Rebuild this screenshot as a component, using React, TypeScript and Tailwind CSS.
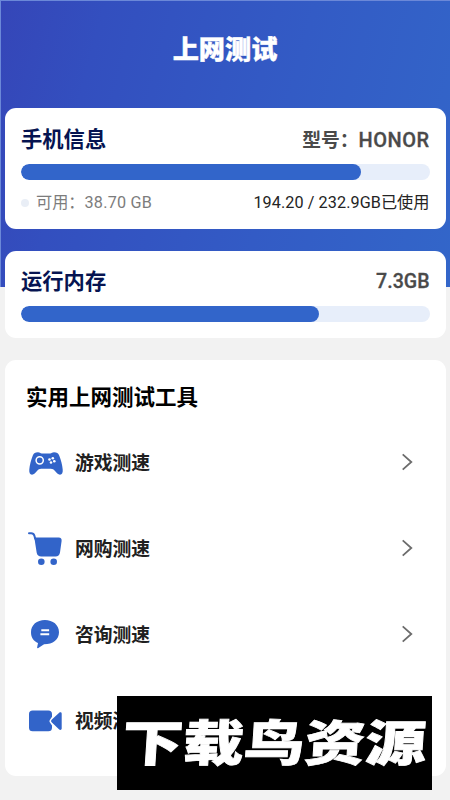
import type { ReactNode } from 'react';

const GamepadIcon = () => (
  <svg width="36" height="28" viewBox="0 0 36 28" fill="#3264c9">
    <path d="M10 4.300c-2.800 0-4.300 1-5.200 3.300C3 12 1.700 17 1.300 21.500c-.3 3 .6 5.200 2.700 5.200 2 0 3.500-1.700 5-3.600 1.300-1.600 2.300-2.300 4.200-2.300h9.600c1.900 0 2.900.7 4.200 2.300 1.500 1.900 3 3.600 5 3.600 2.100 0 3-2.200 2.700-5.200-.4-4.500-1.700-9.500-3.500-13.900-.9-2.300-2.400-3.300-5.200-3.300-1.700 0-2.300 1.200-3.800 1.200h-8.400c-1.500 0-2.100-1.200-3.800-1.200Z" />
    <circle cx="11.700" cy="12.300" r="3.600" fill="none" stroke="white" strokeWidth="1.500" />
    <g fill="white">
      <circle cx="24.800" cy="10.200" r="1.300" />
      <circle cx="21.500" cy="11.500" r="1.300" />
      <circle cx="26.300" cy="13.200" r="1.300" />
      <circle cx="23" cy="14.500" r="1.300" />
    </g>
  </svg>
);

const CartIcon = () => (
  <svg width="36" height="36" viewBox="0 0 36 36" fill="#3264c9">
    <path d="M1 3.200h2.200c1.700 0 2.700.8 3.200 2.500l.8 3" fill="none" stroke="#3264c9" strokeWidth="2" strokeLinecap="round" />
    <path d="M6.300 7.500h24.400c2.200 0 3.200 1.300 2.900 3.400l-1.600 11.600c-.5 2.700-1.900 3.900-4.500 3.900H13.200c-2.500 0-4-1.200-4.500-3.700Z" />
    <circle cx="13.300" cy="31.700" r="3.300" />
    <circle cx="25.700" cy="31.700" r="3.300" />
  </svg>
);

const ChatIcon = () => (
  <svg width="36" height="32" viewBox="0 0 36 32" fill="#3264c9">
    <path d="M16.900 2C8.900 2 3 6.900 3 14.200c0 5.300 2.700 9 7 10.800l-.9 4.500c-.1.700.6 1 1.200.6l5.800-3.900C24.900 26.200 31 21.500 31 14.200 31 6.900 24.900 2 16.900 2Z" />
    <path d="M13.300 12.200h7.800M12.400 16.300h8.800" stroke="white" strokeWidth="1.900" />
  </svg>
);

const VideoIcon = () => (
  <svg width="36" height="24" viewBox="0 0 36 24" fill="#3264c9">
    <path d="M4.600 2.500h15.800c2.300 0 3.600 1.300 3.600 3.600v2.600l-2.200 3.200c-.5.800-.5 1.600 0 2.400L24 17.500v2.200c0 2.300-1.300 3.600-3.600 3.600H4.600C2.300 23.300 1 22 1 19.700V6.100c0-2.300 1.300-3.600 3.600-3.600Z" />
    <path d="M31.200 4.800c1-.9 2.500-.5 2.500.9v14.800c0 1.400-1.500 1.800-2.500.9l-7.300-6.800c-1.100-1-1.100-2 0-3Z" />
  </svg>
);

const Chevron = () => (
  <svg width="12" height="18" viewBox="0 0 12 18" fill="none" stroke="#6c6c6c" strokeWidth="1.800">
    <path d="m1.700 1.300 8.600 7.700-8.600 7.700" />
  </svg>
);

const Progress = ({ value }: { value: number }) => (
  <div className="h-4 overflow-hidden rounded-full bg-[#e7eefa]">
    <div className="h-full rounded-full bg-[#3265ca]" style={{ width: `${value}%` }} />
  </div>
);

const Card = ({ className, children }: { className: string; children: ReactNode }) => (
  <section className={`mr-[4.500px] ml-[5px] rounded-[11px] bg-white ${className}`}>{children}</section>
);

const tools = [
  { label: '游戏测速', icon: <GamepadIcon /> },
  { label: '网购测速', icon: <CartIcon /> },
  { label: '咨询测速', icon: <ChatIcon /> },
  { label: '视频测速', icon: <VideoIcon /> },
];

export default function App() {
  return (
    <div className="relative h-[800px] w-[450px] overflow-hidden bg-[#f2f2f2] font-['Roboto','Noto_Sans_CJK_SC',sans-serif]">
      <div className="absolute inset-x-0 top-0 h-[287px] border-t border-l border-[#6b88d8] bg-[linear-gradient(105deg,#3546b8_0%,#334fbf_20%,#335bc5_60%,#3366c9_100%)]" />
      <div className="relative flex h-full flex-col">
        <header className="flex h-[107.500px] items-start justify-center pt-[28px]">
          <h1 className="font-['Noto_Sans_CJK_SC',sans-serif] text-[26.200px] leading-10 font-black text-white [-webkit-text-stroke:0.400px_white]">上网测试</h1>
        </header>

        <Card className="h-[121px] px-4">
          <div className="flex h-[56.500px] items-center justify-between pt-[8px]">
            <h2 className="text-[21.300px] leading-8 font-bold text-[#061451]">手机信息</h2>
            <span className="flex items-center text-[18.800px] text-[#4a4a4a]">
              <span className="pt-[2px] font-bold">型号：</span>
              <span className="pt-px text-[20px] font-medium tracking-[0.500px] [-webkit-text-stroke:0.300px_#4a4a4a]">HONOR</span>
            </span>
          </div>
          <Progress value={83.3} />
          <div className="mt-[11px] flex h-6 items-center justify-between text-[16.200px] whitespace-nowrap">
            <span className="flex items-center text-[#7c7c7c]">
              <i className="mr-[7px] size-2 rounded-full bg-[#e9eef6]" />
              <span>可用：</span>
              <span className="tracking-[0.200px]">38.70 GB</span>
            </span>
            <span className="text-[#242424]"><span className="tracking-[0.080px]">194.20 / 232.9GB</span>已使用</span>
          </div>
        </Card>

        <Card className="mt-[22px] h-[87.500px] px-4">
          <div className="flex h-[55px] items-center justify-between pt-[8px]">
            <h2 className="text-[21.300px] leading-8 font-bold text-[#061451]">运行内存</h2>
            <span className="text-[19.600px] font-medium text-[#4a4a4a] [-webkit-text-stroke:0.300px_#4a4a4a]">7.3GB</span>
          </div>
          <Progress value={73} />
        </Card>

        <Card className="mt-[22px] h-[416px]">
          <h2 className="pt-[22px] pl-[21px] text-[21.500px] leading-8 font-bold text-black">实用上网测试工具</h2>
          <ul className="mt-[5px]">
            {tools.map((tool) => (
              <li key={tool.label} className="flex h-[86px] items-center pr-[33px] pl-[23px]">
                <span className="flex w-[36px] shrink-0 justify-center">{tool.icon}</span>
                <span className="ml-[11px] flex-1 pt-[4px] text-[18.800px] font-bold text-[#202020]">{tool.label}</span>
                <Chevron />
              </li>
            ))}
          </ul>
        </Card>
      </div>

      <div className="absolute top-[696px] left-[117px] flex h-[94px] w-[315px] items-center justify-center bg-black pb-[8px]">
        <span className="origin-center scale-x-[1.240] -skew-x-3 font-['Noto_Sans_CJK_SC',sans-serif] text-[49px] leading-none font-black whitespace-nowrap text-white [-webkit-text-stroke:0.800px_white]">下载鸟资源</span>
      </div>
    </div>
  );
}
